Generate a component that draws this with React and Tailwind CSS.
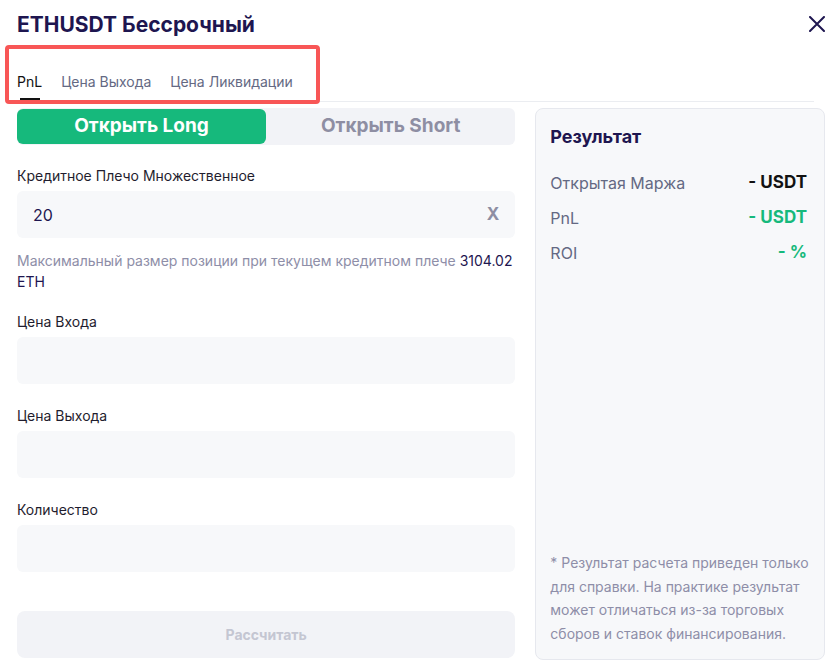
function Field({ label, value, suffix }) {
  return (
    <div className="flex flex-col">
      <div className="text-[14px] leading-[20px] text-[#1f1d2e] mb-[5px]">{label}</div>
      <div className="h-[47px] rounded-[6px] bg-[#f7f8fa] flex items-center justify-between px-4">
        <span className="text-[16px] text-[#1e1650]">{value}</span>
        {suffix && <span className="text-[17px] font-bold text-[#8e8ea3]">{suffix}</span>}
      </div>
    </div>
  );
}

export default function App() {
  const rows = [
    { label: 'Открытая Маржа', value: '- USDT', color: 'text-[#121212]' },
    { label: 'PnL', value: '- USDT', color: 'text-[#16b97c]' },
    { label: 'ROI', value: '- %', color: 'text-[#16b97c]' },
  ];

  return (
    <div className="relative w-[831px] h-[669px] bg-white font-['Inter',sans-serif] overflow-hidden">
      <div className="flex items-center justify-between pl-[17px] pr-[6px] pt-[7px] h-[42px]">
        <h1 className="text-[21px] font-bold text-[#1e1650]">ETHUSDT Бессрочный</h1>
        <svg width="16" height="16" viewBox="0 0 16 16" className="mt-[-2px]">
          <path d="M1 1L15 15M15 1L1 15" stroke="#1e1650" strokeWidth="2" strokeLinecap="round" />
        </svg>
      </div>

      <div className="mx-[17px] mt-[30px] flex gap-[19px] border-b border-[#ebedf1] h-[30px]">
        <div className="relative flex flex-col items-center">
          <span className="text-[14px] leading-[20px] text-[#121212]">PnL</span>
          <span className="absolute bottom-[1px] w-[20px] h-[2px] bg-[#121212]" />
        </div>
        <span className="text-[14px] leading-[20px] text-[#646983]">Цена Выхода</span>
        <span className="text-[14px] leading-[20px] text-[#646983]">Цена Ликвидации</span>
      </div>

      <div className="flex gap-[20px] pl-[17px] pr-[6px] pt-[6px]">
        <div className="w-[499px] flex flex-col">
          <div className="h-[37px] rounded-[6px] bg-[#f2f3f7] flex">
            <div className="w-[249px] h-[35px] rounded-[6px] bg-[#16b97c] flex items-center justify-center text-white text-[19px] font-bold mt-[1px]">
              Открыть Long
            </div>
            <div className="flex-1 flex items-center justify-center text-[#8e8ea3] text-[19px] font-bold">
              Открыть Short
            </div>
          </div>

          <div className="mt-[21px]">
            <Field label="Кредитное Плечо Множественное" value="20" suffix="X" />
          </div>

          <p className="mt-[12px] text-[14px] leading-[21px] text-[#8e8ea8]">
            Максимальный размер позиции при текущем кредитном плече <span className="text-[#1e1650]">3104.02</span>{' '}
            <span className="text-[#1e1650]">ETH</span>
          </p>

          <div className="mt-[20px] flex flex-col gap-[22px]">
            <Field label="Цена Входа" value="" />
            <Field label="Цена Выхода" value="" />
            <Field label="Количество" value="" />
          </div>

          <button className="mt-[39px] h-[47px] rounded-[8px] bg-[#f2f3f7] text-[14px] font-bold text-[#c4c6d2]">
            Рассчитать
          </button>
        </div>

        <div className="w-[290px] h-[552px] rounded-[8px] border border-[#e6e8ee] bg-[#f7f8fa] flex flex-col px-[14px] pt-[14px] pb-[14px]">
          <div className="text-[18px] font-bold text-[#1e1650]">Результат</div>
          <div className="mt-[22px] pr-[3px] flex flex-col gap-[13px]">
            {rows.map(r => (
              <div key={r.label} className="flex justify-between items-center h-[22px]">
                <span className="text-[16px] text-[#646983]">{r.label}</span>
                <span className={`text-[17px] font-bold ${r.color}`}>{r.value}</span>
              </div>
            ))}
          </div>
          <p className="mt-auto text-[14px] leading-[23.5px] text-[#8e8ea8]">
            * Результат расчета приведен только для справки. На практике результат может отличаться из-за торговых сборов и ставок финансирования.
          </p>
        </div>
      </div>

      <div className="absolute left-[5px] top-[45px] w-[315px] h-[59px] rounded-[4px] border-[4px] border-[#f85656] pointer-events-none" />
    </div>
  );
}
